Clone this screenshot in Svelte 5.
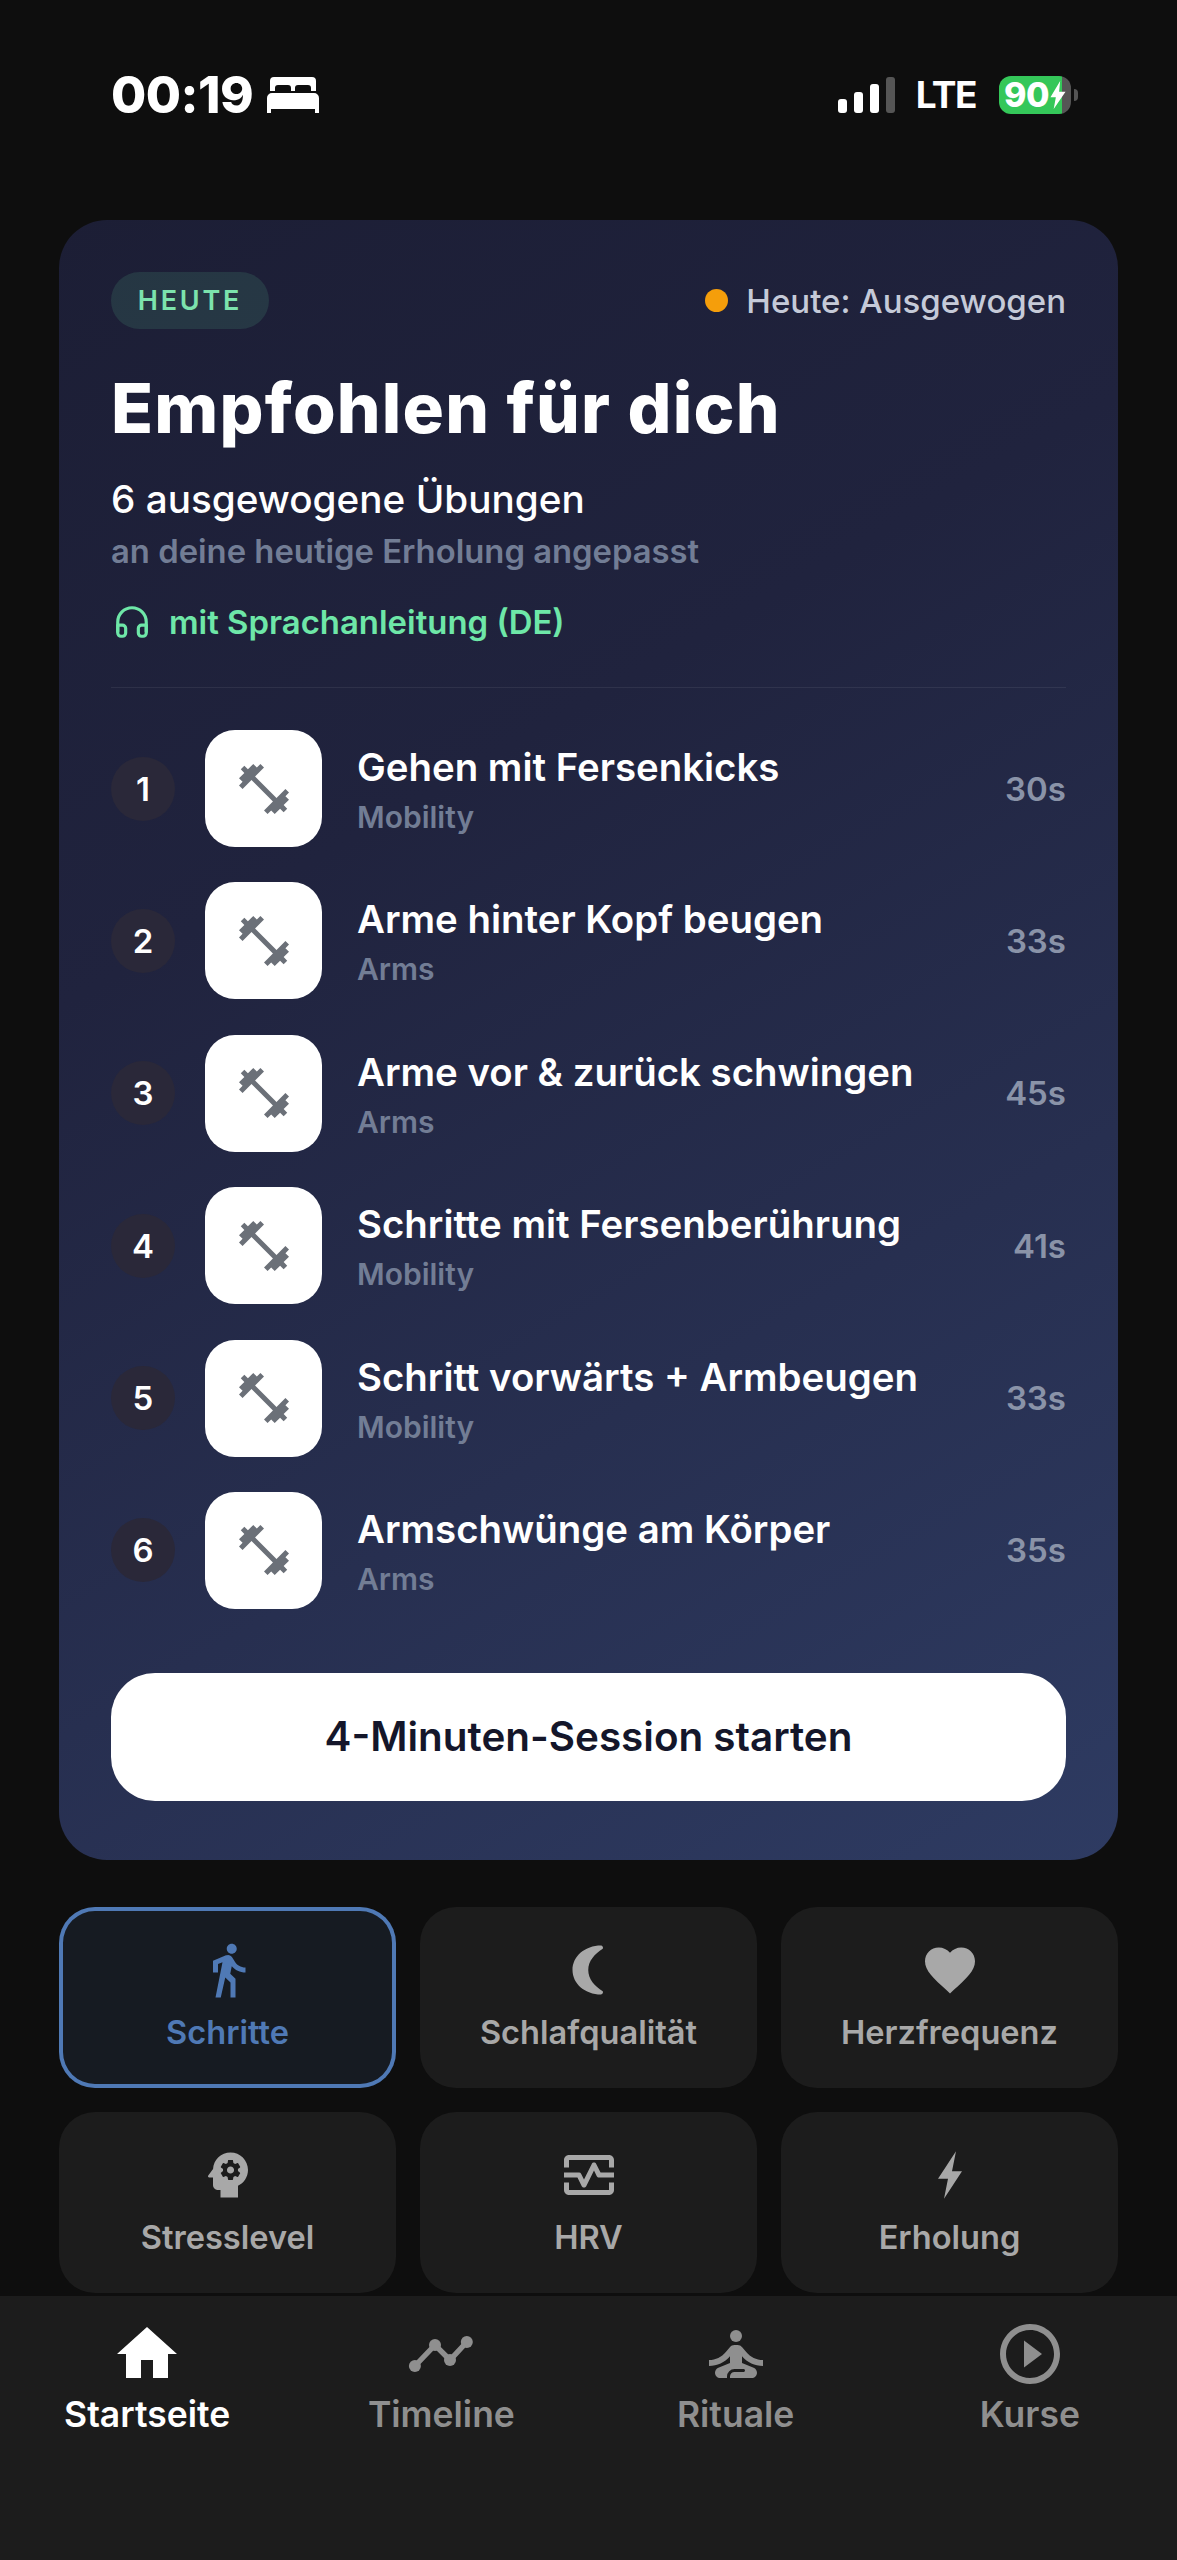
<script>
  const rows = [
    { n: 1, t: 'Gehen mit Fersenkicks', c: 'Mobility', d: '30s' },
    { n: 2, t: 'Arme hinter Kopf beugen', c: 'Arms', d: '33s' },
    { n: 3, t: 'Arme vor & zurück schwingen', c: 'Arms', d: '45s' },
    { n: 4, t: 'Schritte mit Fersenberührung', c: 'Mobility', d: '41s' },
    { n: 5, t: 'Schritt vorwärts + Armbeugen', c: 'Mobility', d: '33s' },
    { n: 6, t: 'Armschwünge am Körper', c: 'Arms', d: '35s' }
  ];
</script>

<div class="phone">
  <header class="status">
    <div class="left">
      <span class="time">00:19</span>
      <svg class="bed" viewBox="0 0 52 36" fill="#fff"><path d="M7 0h38a4 4 0 0 1 4 4v10h-5v-3a3 3 0 0 0-3-3H31a3 3 0 0 0-3 3v3h-4v-3a3 3 0 0 0-3-3H11a3 3 0 0 0-3 3v3H3V4a4 4 0 0 1 4-4zM5 16h42a5 5 0 0 1 5 5v15h-4v-4H4v4H0V21a5 5 0 0 1 5-5z"/></svg>
    </div>
    <div class="right">
      <div class="signal"><i class="b1"></i><i class="b2"></i><i class="b3"></i><i class="b4"></i></div>
      <span class="lte">LTE</span>
      <div class="battery">
        <div class="cell"><span>90</span><svg viewBox="0 0 14 26" fill="#fff"><path d="M9 0 0 15h5l-2 11 11-16H8z"/></svg></div>
        <i class="nub"></i>
      </div>
    </div>
  </header>

  <section class="card">
    <div class="top">
      <span class="badge">HEUTE</span>
      <span class="state"><i class="dot"></i>Heute: Ausgewogen</span>
    </div>
    <h1>Empfohlen für dich</h1>
    <p class="sub">6 ausgewogene Übungen</p>
    <p class="note">an deine heutige Erholung angepasst</p>
    <p class="voice">
      <svg viewBox="0 0 24 24" fill="none" stroke="#6ee7a8" stroke-width="2" stroke-linecap="round" stroke-linejoin="round"><path d="M3 18v-6a9 9 0 0 1 18 0v6"/><path d="M21 19a2 2 0 0 1-2 2h-1a2 2 0 0 1-2-2v-3a2 2 0 0 1 2-2h3zM3 19a2 2 0 0 0 2 2h1a2 2 0 0 0 2-2v-3a2 2 0 0 0-2-2H3z"/></svg>
      mit Sprachanleitung (DE)
    </p>
    <div class="divider"></div>
    <ul class="list">
      {#each rows as r}
        <li>
          <span class="num">{r.n}</span>
          <span class="thumb">
            <svg viewBox="0 0 24 24" fill="#6b7078"><path d="M20.57 14.86L22 13.43 20.57 12 17 15.57 8.43 7 12 3.43 10.57 2 9.14 3.43 7.71 2 5.57 4.14 4.14 2.71 2.71 4.14l1.43 1.43L2 7.71l1.43 1.43L2 10.57 3.43 12 7 8.43 15.57 17 12 20.57 13.43 22l1.43-1.43L16.29 22l2.14-2.14 1.43 1.43 1.43-1.43-1.43-1.43L22 16.29z"/></svg>
          </span>
          <span class="txt"><b>{r.t}</b><small>{r.c}</small></span>
          <span class="dur">{r.d}</span>
        </li>
      {/each}
    </ul>
    <button class="cta">4-Minuten-Session starten</button>
  </section>

  <section class="grid">
    <div class="tile active">
      <svg viewBox="0 0 24 24"><path d="M13.5 5.5c1.1 0 2-.9 2-2s-.9-2-2-2-2 .9-2 2 .9 2 2 2zM9.8 8.9L7 23h2.1l1.8-8 2.1 2v6h2v-7.5l-2.1-2 .6-3C14.8 12 16.8 13 19 13v-2c-1.9 0-3.5-1-4.3-2.4l-1-1.6c-.4-.6-1-1-1.7-1-.3 0-.5.1-.8.1L6 8.3V13h2V9.6l1.8-.7"/></svg>
      <span>Schritte</span>
    </div>
    <div class="tile">
      <svg viewBox="0 0 24 24"><path d="M16.800 2.200a.9.9 0 0 1 .7 1.300C14.300 5.600 11.700 8.300 11.700 12s2.600 6.400 5.800 8.500a.9.9 0 0 1-.7 1.300C10.400 21.800 5.400 17.500 5.400 12S10.400 2.200 16.800 2.200z"/></svg>
      <span>Schlafqualität</span>
    </div>
    <div class="tile">
      <svg viewBox="0 0 24 24"><path d="M12 21.35l-1.45-1.32C5.4 15.36 2 12.28 2 8.500 2 5.420 4.420 3 7.500 3c1.740 0 3.410.81 4.500 2.090C13.090 3.810 14.760 3 16.500 3 19.580 3 22 5.420 22 8.500c0 3.780-3.400 6.860-8.550 11.540L12 21.350z"/></svg>
      <span>Herzfrequenz</span>
    </div>
    <div class="tile">
      <svg viewBox="0 0 24 24"><path d="M13 8.570c-.79 0-1.430.64-1.430 1.430s.64 1.430 1.430 1.430 1.430-.64 1.430-1.430-.64-1.430-1.430-1.430z"/><path d="M13 3C9.250 3 6.200 5.940 6.020 9.640L4.100 12.200c-.25.33-.01.8.4.8H6v3c0 1.100.9 2 2 2h1v3h7v-4.680c2.360-1.120 4-3.530 4-6.320 0-3.870-3.130-7-7-7zm3 7c0 .13-.01.26-.02.39l.83.66c.08.06.1.16.05.25l-.8 1.390c-.05.09-.16.12-.24.09l-.99-.4c-.21.16-.43.29-.67.39L14 13.830c-.01.1-.1.17-.2.17h-1.600c-.1 0-.18-.07-.2-.17l-.15-1.060c-.25-.1-.47-.23-.68-.39l-.99.4c-.09.03-.2 0-.25-.09l-.8-1.390c-.05-.08-.03-.19.05-.25l.84-.66c-.01-.13-.02-.26-.02-.39s.02-.27.04-.39l-.85-.66c-.08-.06-.1-.16-.05-.26l.8-1.380c.05-.09.15-.12.24-.09l1 .4c.2-.15.43-.29.67-.39L12 6.170c.02-.1.1-.17.2-.17h1.600c.1 0 .18.07.2.17l.15 1.060c.24.1.46.23.67.39l1-.4c.09-.03.2 0 .24.09l.8 1.380c.05.09.03.2-.05.26l-.85.66c.03.12.04.25.04.39z"/></svg>
      <span>Stresslevel</span>
    </div>
    <div class="tile">
      <svg viewBox="0 0 24 24"><path d="M20 4H4c-1.100 0-2 .9-2 2v3h2V6h16v3h2V6c0-1.100-.9-2-2-2zm0 14H4v-3H2v3c0 1.100.9 2 2 2h16c1.100 0 2-.9 2-2v-3h-2v3z"/><path d="M14.890 7.550c-.34-.68-1.450-.68-1.790 0L10 13.760l-1.110-2.210A.988.988 0 0 0 8 11H2v2h5.380l1.720 3.450c.18.34.52.55.9.55s.72-.21.89-.55L14 10.240l1.110 2.210c.17.34.51.55.89.55h6v-2h-5.380l-1.730-3.450z"/></svg>
      <span>HRV</span>
    </div>
    <div class="tile">
      <svg viewBox="0 0 24 24"><path d="M14.400 2.500 7.200 13.500h4L9.600 21.500l7.200-11h-4z"/></svg>
      <span>Erholung</span>
    </div>
  </section>

  <nav class="nav">
    <div class="item on">
      <svg viewBox="0 0 24 24"><path d="M10 20v-6h4v6h5v-8h3L12 3 2 12h3v8z"/></svg>
      <span>Startseite</span>
    </div>
    <div class="item">
      <svg viewBox="0 0 24 24"><path class="ln" d="M3.300 16 10 9l5 5 5.600-6"/><circle cx="3.300" cy="16" r="2"/><circle cx="10" cy="9" r="2"/><circle cx="15" cy="14" r="2"/><circle cx="20.600" cy="8" r="2"/></svg>
      <span>Timeline</span>
    </div>
    <div class="item">
      <svg viewBox="0 0 24 24"><circle cx="12" cy="6" r="2"/><path d="M21 16v-2c-2.240 0-4.160-.96-5.600-2.680l-1.340-1.600A1.980 1.980 0 0 0 12.530 9h-1.050c-.59 0-1.150.26-1.530.72l-1.340 1.600C7.160 13.040 5.240 14 3 14v2c2.770 0 5.190-1.170 7-3.250V15l-3.880 1.550c-.67.27-1.120.93-1.120 1.660C5 19.200 5.800 20 6.790 20H9v-.5a2.500 2.500 0 0 1 2.500-2.500h3c.28 0 .5.22.5.5s-.22.5-.5.5h-3c-.83 0-1.500.67-1.500 1.500v.5h7.210c.99 0 1.790-.8 1.790-1.790 0-.73-.45-1.390-1.120-1.660L14 15v-2.250c1.810 2.080 4.230 3.250 7 3.250z"/></svg>
      <span>Rituale</span>
    </div>
    <div class="item">
      <svg viewBox="0 0 24 24"><path d="M10 16.500l6-4.500-6-4.500v9zM12 2C6.480 2 2 6.480 2 12s4.480 10 10 10 10-4.480 10-10S17.520 2 12 2zm0 18c-4.410 0-8-3.590-8-8s3.590-8 8-8 8 3.590 8 8-3.590 8-8 8z"/></svg>
      <span>Kurse</span>
    </div>
  </nav>
</div>

<style>
  :global(body) { margin: 0; background: #0e0e0e; }
  .phone {
    width: 1177px; height: 2560px; overflow: hidden;
    display: flex; flex-direction: column;
    background: #0e0e0e; color: #fff;
    font-family: Inter, "Liberation Sans", sans-serif;
  }
  .status {
    height: 220px; flex: none; box-sizing: border-box;
    padding: 69px 99px 0 111px;
    display: flex; justify-content: space-between; align-items: flex-start;
  }
  .left { display: flex; align-items: center; gap: 14px; height: 52px; }
  .time { font-size: 51px; font-weight: 800; line-height: 52px; letter-spacing: -0.5px; }
  .bed { width: 52px; height: 36px; }
  .right { display: flex; align-items: center; height: 52px; }
  .signal { display: flex; align-items: flex-end; gap: 7px; height: 36px; }
  .signal i { width: 9px; background: #fff; border-radius: 3px; display: block; }
  .b1 { height: 14px; } .b2 { height: 21px; } .b3 { height: 29px; }
  .signal .b4 { height: 36px; background: #555; }
  .lte { font-size: 37px; font-weight: 700; margin: 0 23px 0 21px; line-height: 52px; letter-spacing: -1.500px; }
  .battery { display: flex; align-items: center; gap: 3px; }
  .cell {
    width: 72px; height: 38px; border-radius: 12px; box-sizing: border-box;
    background: linear-gradient(90deg, #34c759 0 88%, #555 88%);
    display: flex; align-items: center; justify-content: center; gap: 1px;
    font-size: 34px; font-weight: 800; line-height: 38px; letter-spacing: -0.5px;
  }
  .cell svg { width: 16px; height: 28px; }
  .nub { width: 4px; height: 12px; background: #555; border-radius: 0 4px 4px 0; display: block; }

  .card {
    flex: none; box-sizing: border-box;
    margin: 0 59px; height: 1640px; padding: 52px;
    border-radius: 48px;
    background: linear-gradient(150deg, #1c1e35 0%, #20233e 35%, #2e3b62 100%);
  }
  .top { display: flex; justify-content: space-between; align-items: center; height: 57px; }
  .badge {
    height: 57px; width: 158px; border-radius: 29px;
    background: rgba(110, 231, 168, .12); color: #7ce3ad;
    display: flex; align-items: center; justify-content: center;
    font-size: 27px; font-weight: 600; letter-spacing: 2.800px;
  }
  .state { display: flex; align-items: center; gap: 18px; color: #c5cad8; font-size: 33px; font-weight: 500; }
  .dot { width: 23px; height: 23px; border-radius: 50%; background: #f59e0b; display: block; }
  h1 { margin: 39px 0 0; font-size: 69px; line-height: 80px; font-weight: 800; letter-spacing: 1.200px; }
  .sub { margin: 29px 0 0; font-size: 38.700px; line-height: 44px; font-weight: 500; }
  .note { margin: 9px 0 0; font-size: 32.800px; line-height: 42px; font-weight: 600; color: #727d95; }
  .voice { margin: 29px 0 0; display: flex; align-items: center; gap: 18px; color: #6ee7a8; font-size: 32.900px; line-height: 42px; font-weight: 600; }
  .voice svg { width: 38px; height: 38px; margin-left: 2px; }
  .divider { height: 1px; background: rgba(255,255,255,.07); margin: 44px 0 42px; }
  .list { list-style: none; margin: 0; padding: 0; display: flex; flex-direction: column; gap: 35.400px; }
  li { display: flex; align-items: center; height: 117px; }
  .num {
    width: 64px; height: 64px; border-radius: 50%; flex: none;
    background: #2a2839; display: flex; align-items: center; justify-content: center;
    font-size: 33px; font-weight: 600;
  }
  .thumb {
    width: 117px; height: 117px; border-radius: 30px; background: #fff; flex: none; margin-left: 30px;
    display: flex; align-items: center; justify-content: center;
  }
  .thumb svg { width: 60px; height: 60px; }
  .txt { flex: 1; margin-left: 35px; display: flex; flex-direction: column; gap: 8px; padding-top: 3px; }
  .txt b { font-size: 38.400px; line-height: 46px; font-weight: 600; }
  .txt small { font-size: 30px; line-height: 38px; font-weight: 600; color: #727d95; }
  .dur { font-size: 33px; font-weight: 600; color: #8a93a8; }
  .cta {
    display: block; width: 100%; height: 128px; margin-top: 64px; padding-top: 2px;
    border: none; border-radius: 44px; background: #fff; color: #14162a;
    font: 600 40.400px/1 Inter, sans-serif;
  }

  .grid {
    flex: none; margin: 47px 59px 0; display: grid;
    grid-template-columns: repeat(3, 1fr); gap: 24px;
  }
  .tile {
    height: 181px; box-sizing: border-box; border-radius: 36px; background: #1c1c1c;
    display: flex; flex-direction: column; align-items: center; padding-top: 33px;
    color: #a8a8a8; font-size: 32.600px; font-weight: 600;
  }
  .tile svg { width: 60px; height: 60px; fill: #a8a8a8; }
  .tile span { margin-top: 11px; line-height: 42px; }
  .tile.active { background: #161b22; box-shadow: inset 0 0 0 4px #4f79b5; color: #4f79b5; }
  .tile.active svg { fill: #4f79b5; }

  .nav { flex: none; margin-top: 3px; height: 264px; background: #1c1c1c; display: grid; grid-template-columns: repeat(4, 1fr); padding-top: 22px; box-sizing: border-box; }
  .item { display: flex; flex-direction: column; align-items: center; color: #8f8f8f; font-size: 35.500px; font-weight: 600; }
  .item svg { width: 72px; height: 72px; fill: #8f8f8f; }
  .item span { line-height: 44px; margin-top: 3px; }
  .item .ln { fill: none; stroke: #8f8f8f; stroke-width: 1.800; }
  .item.on { color: #fff; }
  .item.on svg { fill: #fff; }
</style>
